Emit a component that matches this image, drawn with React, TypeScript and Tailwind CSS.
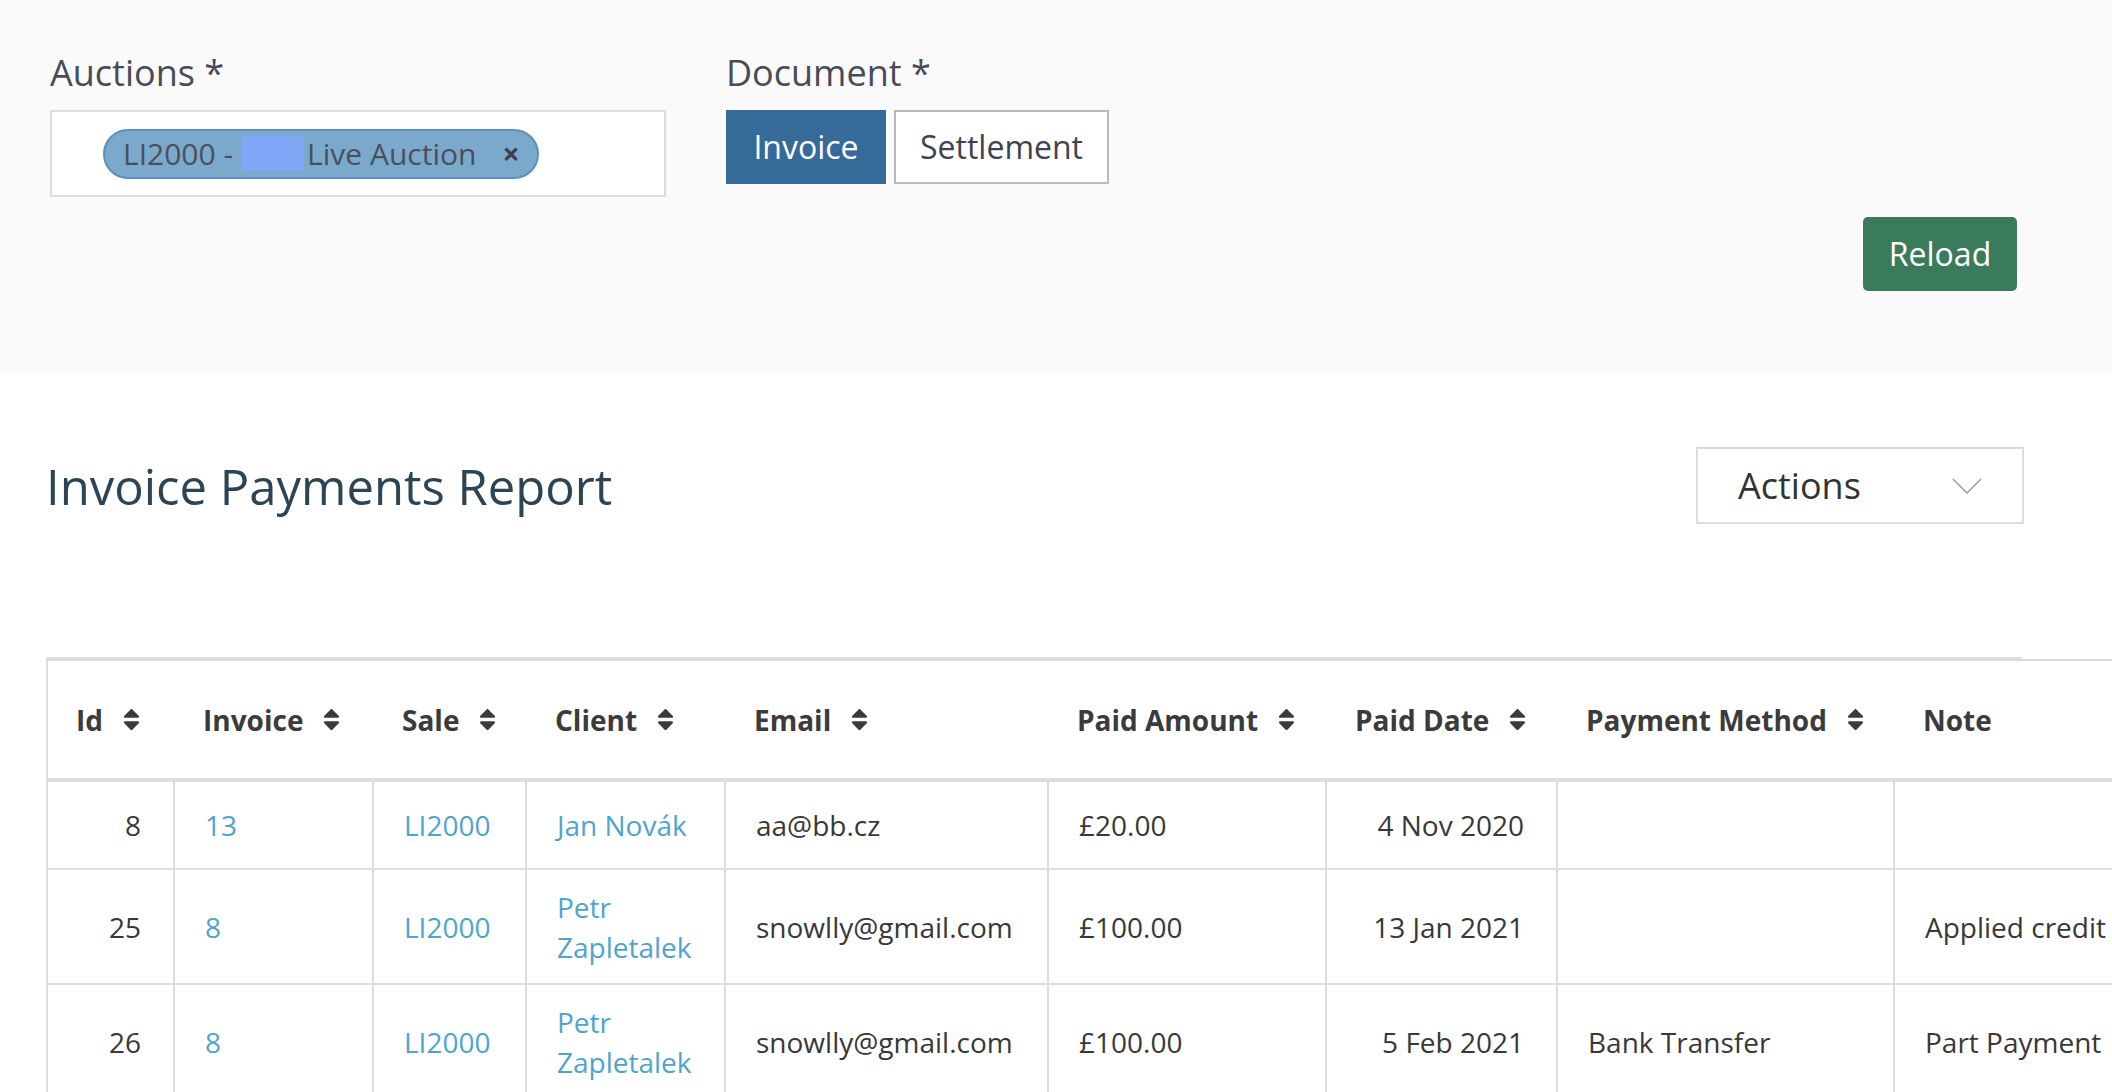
import React from 'react'

type Col = {
  label: string
  w: string
  sort: boolean
  align: 'left' | 'right'
  link?: boolean
  first?: boolean
}

const cols: Col[] = [
  { label: 'Id', w: 'w-[125px]', sort: true, align: 'right', first: true },
  { label: 'Invoice', w: 'w-[199px]', sort: true, align: 'left', link: true },
  { label: 'Sale', w: 'w-[153px]', sort: true, align: 'left', link: true },
  { label: 'Client', w: 'w-[199px]', sort: true, align: 'left', link: true },
  { label: 'Email', w: 'w-[323px]', sort: true, align: 'left' },
  { label: 'Paid Amount', w: 'w-[278px]', sort: true, align: 'left' },
  { label: 'Paid Date', w: 'w-[231px]', sort: true, align: 'right' },
  { label: 'Payment Method', w: 'w-[337px]', sort: true, align: 'left' },
  { label: 'Note', w: 'w-[320px]', sort: false, align: 'left' },
]

const rows: string[][] = [
  ['8', '13', 'LI2000', 'Jan Novák', 'aa@bb.cz', '£20.00', '4 Nov 2020', '', ''],
  ['25', '8', 'LI2000', 'Petr Zapletalek', 'snowlly@gmail.com', '£100.00', '13 Jan 2021', '', 'Applied credit'],
  ['26', '8', 'LI2000', 'Petr Zapletalek', 'snowlly@gmail.com', '£100.00', '5 Feb 2021', 'Bank Transfer', 'Part Payment'],
]

function SortIcon() {
  return (
    <svg viewBox="0 0 320 512" className="w-[17px] h-[27px] ml-[20px] shrink-0 fill-[#3b3b3b]">
      <path d="M41 288h238c21.4 0 32.1 25.9 17 41L177 448c-9.4 9.4-24.6 9.4-33.9 0L24 329c-15.1-15.1-4.4-41 17-41zm255-105L177 64c-9.4-9.4-24.6-9.4-33.9 0L24 183c-15.1 15.1-4.4 41 17 41h238c21.4 0 32.1-25.9 17-41z" />
    </svg>
  )
}

export default function App() {
  return (
    <div className="min-h-screen w-full overflow-hidden bg-white font-['Open_Sans',sans-serif]">
      {/* Filters */}
      <div className="bg-[#fafafa] h-[373px] px-[50px] pt-[49px]">
        <div className="flex gap-[60px]">
          <div className="w-[616px]">
            <div className="text-[36px] leading-[48px] text-[#474c57]">Auctions *</div>
            <div className="mt-[13px] h-[87px] border-2 border-[#dcdcdc] bg-white flex items-center pl-[51px]">
              <div className="h-[50px] rounded-full border-2 border-[#5b8fbf] bg-[#7ba9cb] flex items-center pl-[18px] pr-[17px] text-[30px] text-[#4a505b] whitespace-nowrap">
                <span>LI2000 -</span>
                <span className="inline-block w-[63px] h-[35px] ml-[8px] bg-[#80a8f8]" />
                <span className="ml-[3px]">Live Auction</span>
                <span className="ml-[26px] font-bold text-[#3b404b] leading-none">×</span>
              </div>
            </div>
          </div>
          <div>
            <div className="text-[36px] leading-[48px] text-[#474c57]">Document *</div>
            <div className="mt-[13px] flex gap-[8px]">
              <button className="w-[160px] h-[74px] bg-[#356a99] text-white text-[32px]">Invoice</button>
              <button className="w-[215px] h-[74px] border-2 border-[#bababa] bg-white text-[32px] text-[#3e4350]">Settlement</button>
            </div>
          </div>
        </div>
        <div className="mt-[20px] flex justify-end pr-[45px]">
          <button className="w-[154px] h-[74px] rounded-[5px] bg-[#3a7b5c] text-white text-[32px]">Reload</button>
        </div>
      </div>

      {/* Report */}
      <div className="pl-[46px] pr-[88px] pt-[74px]">
        <div className="flex items-center justify-between">
          <h1 className="text-[49px] leading-[64px] text-[#2c4454]">Invoice Payments Report</h1>
          <div className="w-[328px] h-[77px] border-2 border-[#dcdcdc] flex items-center justify-between pl-[40px] pr-[40px]">
            <span className="text-[36px] text-[#333333]">Actions</span>
            <svg viewBox="0 0 30 16" className="w-[30px] h-[16px]">
              <polyline points="1,1 15,15 29,1" fill="none" stroke="#a0a0a0" strokeWidth="1.6" />
            </svg>
          </div>
        </div>

        <div className="mt-[133px]">
          <div className="w-[1976px] h-[2px] bg-[#dddddd]" />
          <div className="w-max border-l-2 border-[#dddddd]">
            <div className="flex border-t-2 border-b-4 border-[#dddddd]">
              {cols.map((c) => (
                <div
                  key={c.label}
                  className={`${c.w} h-[117px] flex items-center pl-[28px] text-[28px] font-bold text-[#3b3b3b] whitespace-nowrap ${c.first ? '' : 'border-l-2 border-transparent'}`}
                >
                  <span>{c.label}</span>
                  {c.sort && <SortIcon />}
                </div>
              ))}
            </div>
            {rows.map((r, i) => (
              <div key={i} className="flex border-b-2 border-[#dddddd]">
                {cols.map((c, j) => (
                  <div
                    key={j}
                    className={`${c.w} min-h-[86px] py-[16.5px] flex items-center text-[28px] leading-[40px] ${c.first ? '' : 'border-l-2 border-[#dddddd]'} ${c.align === 'right' ? 'justify-end pr-[32px] pl-[20px]' : 'pl-[30px] pr-[20px]'} ${c.link ? 'text-[#4fa4cf]' : 'text-[#383838]'}`}
                  >
                    <span className={c.align === 'right' ? 'text-right' : ''}>{r[j]}</span>
                  </div>
                ))}
              </div>
            ))}
          </div>
        </div>
      </div>
    </div>
  )
}
